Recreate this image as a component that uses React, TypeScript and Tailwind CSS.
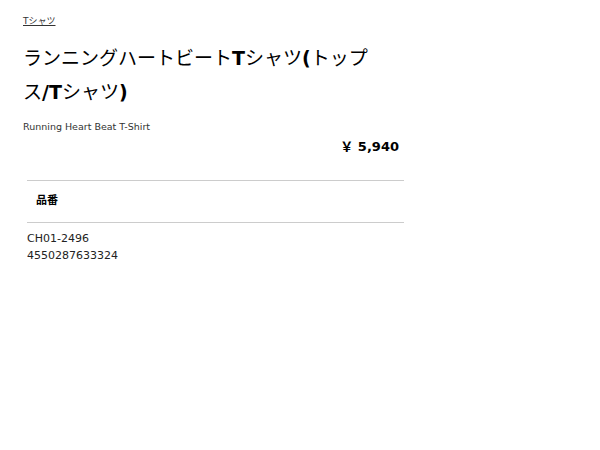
export default function App() {
  return (
    <div className="min-h-[450px] w-[600px] bg-white text-[#222]">
      <div className="ml-[23px] w-[381px] pt-[15px] font-['DejaVu_Sans','Noto_Sans_CJK_JP',sans-serif]">
        {/* Breadcrumb */}
        <a className="block text-[9px] leading-[12px] text-[#333] underline">Tシャツ</a>

        {/* Title */}
        <h1 className="mt-[14px] w-[355px] text-[19px] leading-[34px] font-normal text-black">
          ランニングハートビート<b>T</b>シャツ<b>(</b>トップス<b>/T</b>シャツ<b>)</b>
        </h1>

        <p className="mt-[11px] text-[9.5px] leading-[14px] text-[#333]">Running Heart Beat T-Shirt</p>

        {/* Price */}
        <div className="mt-[4px] pr-[5px] text-right text-[13px] leading-[18px] font-bold text-black">
          ￥ 5,940
        </div>

        {/* Spec table */}
        <div className="ml-[4px] mt-[24px] border-t border-[#ccc]">
          <div className="border-b border-[#ccc] pt-[11px] pb-[13px] pl-[9px] text-[11px] leading-[17px] font-bold text-black">
            品番
          </div>
          <div className="pt-[7px] text-[11px] leading-[17px] text-[#222]">
            <div>CH01-2496</div>
            <div>4550287633324</div>
          </div>
        </div>
      </div>
    </div>
  );
}
